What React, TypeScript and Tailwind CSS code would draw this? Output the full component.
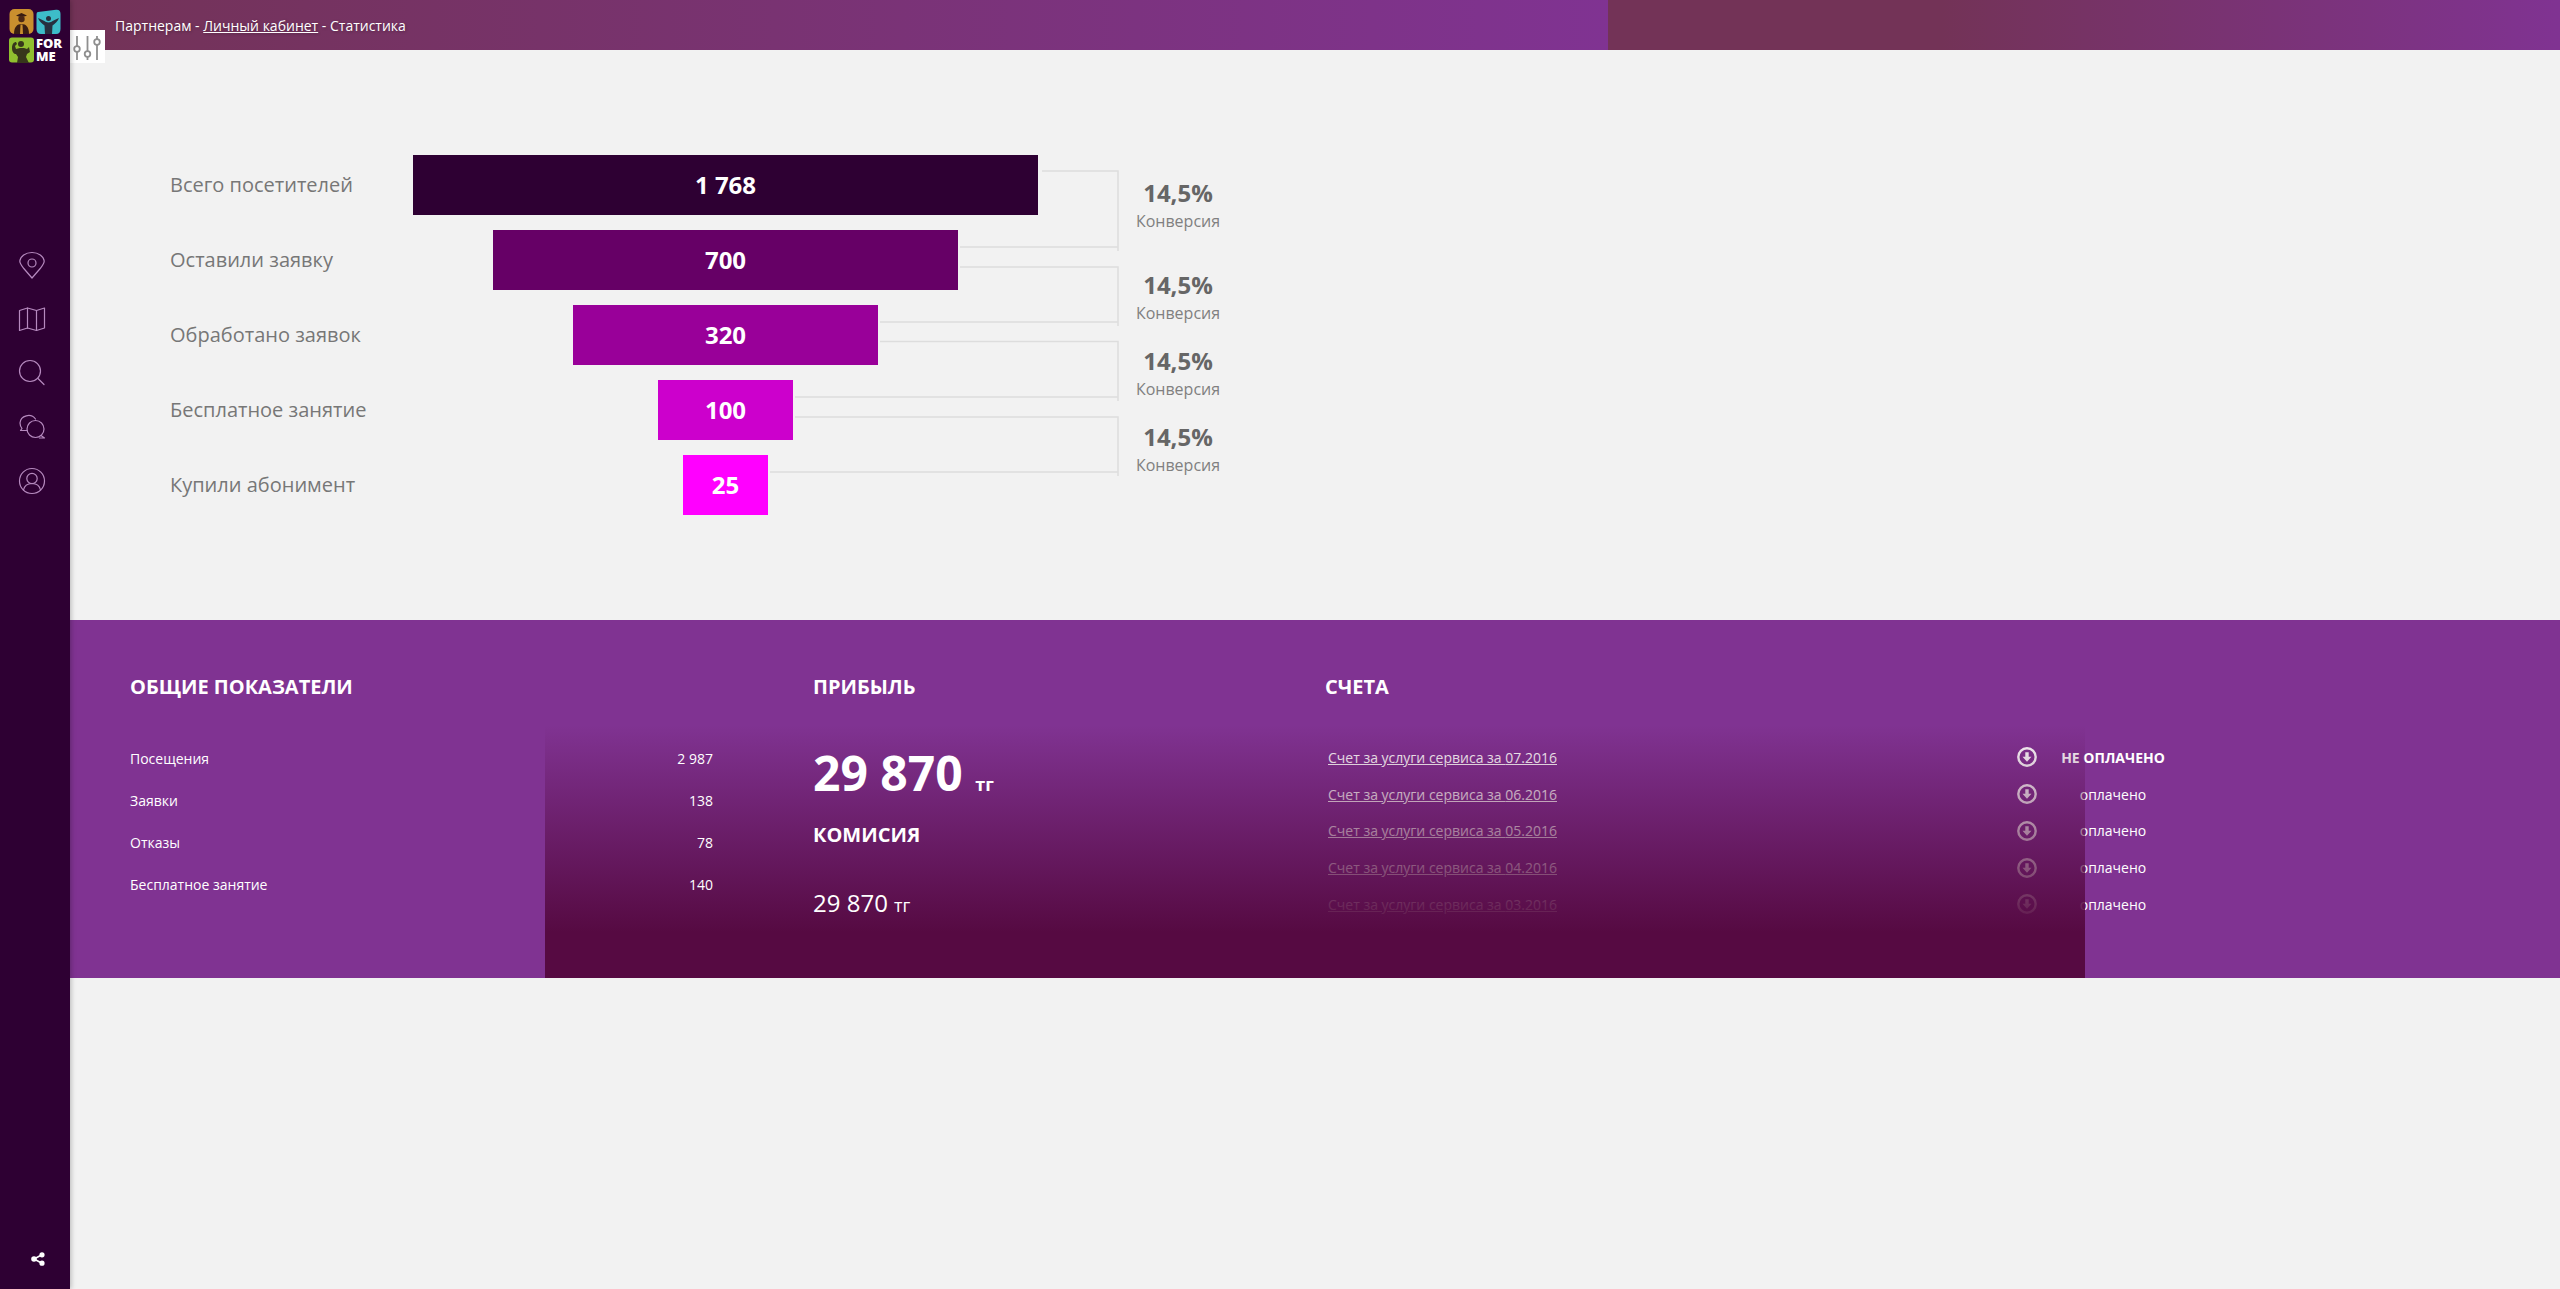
import React from "react";

const rows = [
  { label: "Всего посетителей", value: "1 768", w: "w-[625px]", bg: "bg-[#2e0033]" },
  { label: "Оставили заявку", value: "700", w: "w-[465px]", bg: "bg-[#660066]" },
  { label: "Обработано заявок", value: "320", w: "w-[305px]", bg: "bg-[#990099]" },
  { label: "Бесплатное занятие", value: "100", w: "w-[135px]", bg: "bg-[#cc00cc]" },
  { label: "Купили абонимент", value: "25", w: "w-[85px]", bg: "bg-[#ff00ff]" },
];

const general = [
  ["Посещения", "2 987"],
  ["Заявки", "138"],
  ["Отказы", "78"],
  ["Бесплатное занятие", "140"],
];

const invoices = [
  ["07.2016", "НЕ ОПЛАЧЕНО"],
  ["06.2016", "оплачено"],
  ["05.2016", "оплачено"],
  ["04.2016", "оплачено"],
  ["03.2016", "оплачено"],
];

function Logo() {
  return (
    <div className="grid h-[70px] w-[70px] grid-cols-[25px_25px] grid-rows-[26px_26px] content-start gap-[2px] pl-[9px] pt-[9px]">
      <svg viewBox="0 0 25 26" className="h-[26px] w-[25px]">
        <rect x="0.5" width="24" height="25" rx="5" fill="#c98f2e" />
        <path d="M7 6.500 12.500 4 18 6.500 15.500 7.500H9.500Z" fill="#3a1e12" />
        <circle cx="12.500" cy="10" r="3.200" fill="#4a2815" />
        <path d="M5 25c0-7 3-10 7.500-10S20 18 20 25Z" fill="#3a1e12" />
        <path d="M11.500 15.500h2l.5 9.500h-3Z" fill="#c98f2e" />
      </svg>
      <svg viewBox="0 0 25 26" className="h-[26px] w-[25px]">
        <path d="M2 3 20 .8c3-.3 4.500 1 4.500 4V20c0 3-1.500 5-4.500 5H5c-3 0-4.500-2-4.500-5V6C.5 4 1 3 2 3Z" fill="#3dbdc9" />
        <circle cx="12.500" cy="9.500" r="2.500" fill="#27303f" />
        <path d="M2 9c3 1 6 3 8 4 1.500.6 3.500.6 5 0 2-1 5-3 8-4-1 3-4 6-6.500 7.500L16 25H9l-.5-8.500C6 15 3 12 2 9Z" fill="#27303f" />
      </svg>
      <svg viewBox="0 0 25 26" className="h-[26px] w-[25px]">
        <rect y="0.500" width="25" height="25" rx="3" fill="#90bf2f" />
        <circle cx="12" cy="7" r="3" fill="#37371b" />
        <path d="M3 11c0-4 2-6 4-6l1 2-2 2 1 3 4-1h4l3 1 2-2 1 5-3 2-1 3 3 6H8l1-6-2-3c-2 0-4-2-4-6Z" fill="#37371b" />
      </svg>
      <div className="flex flex-col text-[13px] leading-[13px] font-extrabold text-white">
        <span>FOR</span>
        <span>ME</span>
      </div>
    </div>
  );
}

function NavIcon({ children }: { children: React.ReactNode }) {
  return (
    <div className="flex h-[54px] items-center justify-center pr-[6px]">
      <svg viewBox="0 0 28 28" className="h-[28px] w-[28px]" fill="none" stroke="#b68abf" strokeWidth="1.200" strokeLinejoin="round" strokeLinecap="round">
        {children}
      </svg>
    </div>
  );
}

function Sidebar() {
  return (
    <aside className="relative z-20 flex h-full w-[70px] shrink-0 flex-col bg-[#2e0033] shadow-[1px_0_5px_rgba(0,0,0,0.25)]">
      <Logo />
      <nav className="mt-[168px] flex flex-col">
        <NavIcon>
          <path d="M14 27 5.800 17.500C3.500 14.500 1.800 12.500 1.800 10A12.200 9.200 0 0 1 14 1.500 12.200 9.200 0 0 1 26.200 10c0 2.500-1.700 4.500-4 7.500Z" />
          <circle cx="14" cy="12" r="4" />
        </NavIcon>
        <NavIcon>
          <path d="M1.500 5.500 9.500 3l9 2.500 8-2.500v20l-8 2.500-9-2.500-8 2.500Z" />
          <path d="M9.500 3v20M18.500 5.500v20" />
        </NavIcon>
        <NavIcon>
          <circle cx="12" cy="12" r="10.500" />
          <path d="m20 19.500 6 6" />
        </NavIcon>
        <NavIcon>
          <path d="M9 17.500H2.500L4 15.500C2.500 13.500 2 12 2 10a8.500 8 0 0 1 15.500-4" />
          <circle cx="17.500" cy="16" r="8.500" />
          <path d="m23 22.500 3.500 2.500h-5" />
        </NavIcon>
        <NavIcon>
          <circle cx="14" cy="14" r="12.500" />
          <circle cx="14" cy="11.500" r="5.200" />
          <path d="M5.500 23c.8-4 4-6.500 8.500-6.500S21.700 19 22.500 23" />
        </NavIcon>
      </nav>
      <div className="mt-auto flex justify-center pb-[20px] pl-[6px]">
        <svg viewBox="0 0 14 14" className="h-[20px] w-[20px] p-[3px]" fill="#fff" stroke="#fff" strokeWidth="1.600">
          <path d="M3 7 11 2.800M3 7l8 4.200" />
          <circle cx="3" cy="7" r="2" />
          <circle cx="11" cy="2.800" r="1.800" />
          <circle cx="11" cy="11.200" r="1.800" />
        </svg>
      </div>
    </aside>
  );
}

function TopBar() {
  return (
    <header className="relative flex h-[50px] shrink-0">
      <div className="flex w-[1538px] items-center bg-[linear-gradient(to_right,#733357,#803392)] pl-[45px] text-[14px] text-white [text-shadow:1px_1px_3px_rgba(0,0,0,0.3)]">
        <span>
          Партнерам - <a className="underline">Личный кабинет</a> - Статистика
        </span>
      </div>
      <div className="flex-1 bg-[linear-gradient(to_right,#733357,#733357_35%,#803392)]" />
      <button className="absolute top-[30px] left-0 flex h-[33px] w-[35px] items-center justify-center bg-white">
        <svg viewBox="0 0 35 33" className="h-[33px] w-[35px]" fill="none" stroke="#8f8f8f" strokeWidth="1.800">
          <path d="M7 6v10M7 22v8M17.500 6v15M17.500 27v3M27 6v3M27 15v15" />
          <circle cx="7" cy="19" r="2.800" />
          <circle cx="17.500" cy="24" r="2.800" />
          <circle cx="27" cy="12" r="2.800" />
        </svg>
      </button>
    </header>
  );
}

function Funnel() {
  const conv = ["mt-0", "mt-[36px]", "mt-[20px]", "mt-[20px]"];
  return (
    <section className="relative flex h-[570px] shrink-0 pt-[105px] pl-[100px]">
      <div className="flex flex-col gap-[15px]">
        {rows.map((r) => (
          <div key={r.label} className="flex h-[60px] items-center">
            <div className="w-[243px] text-[20px] text-[#777777]">{r.label}</div>
            <div className="flex w-[625px] justify-center">
              <div className={`flex h-[60px] items-center justify-center text-[24px] font-bold text-white ${r.w} ${r.bg}`}>{r.value}</div>
            </div>
          </div>
        ))}
      </div>
      <div className="ml-[85px] flex w-[110px] flex-col pt-[22px] text-center">
        {conv.map((c, i) => (
          <div key={i} className={c}>
            <div className="text-[24px] leading-[32px] font-bold text-[#666666]">14,5%</div>
            <div className="text-[16px] leading-[24px] text-[#808080]">Конверсия</div>
          </div>
        ))}
      </div>
      <svg className="pointer-events-none absolute top-0 left-0 h-[570px] w-[1100px]" fill="none" stroke="#dddddd" strokeWidth="1.500">
        <path d="M972 121H1048V201M890 197H1048" />
        <path d="M890 217H1048V276M810 272H1048" />
        <path d="M810 291.500H1048V351M725 347H1048" />
        <path d="M725 367H1048V426M700 422H1048" />
      </svg>
    </section>
  );
}

function DownloadIcon() {
  return (
    <svg viewBox="0 0 20 20" className="h-[20px] w-[20px] shrink-0">
      <circle cx="10" cy="10" r="8.700" fill="none" stroke="#fff" strokeWidth="2.400" />
      <path d="M8.300 5.200h3.400V9.700H14.500l-4.500 5-4.500-5h2.800Z" fill="#fff" />
    </svg>
  );
}

function Band() {
  return (
    <section className="relative flex h-[358px] shrink-0 bg-[#803392] pt-[53px] pl-[60px] text-white">
      <div className="absolute top-[105px] right-[475px] bottom-0 left-[475px] z-10 bg-[linear-gradient(to_bottom,rgba(86,10,66,0),#560a42_82%)]" />
      <div className="relative z-20 mr-[100px] w-[583px]">
        <h2 className="text-[20px] leading-[28px] font-bold">ОБЩИЕ ПОКАЗАТЕЛИ</h2>
        <div className="mt-[36px] flex flex-col">
          {general.map(([a, b]) => (
            <div key={a} className="flex h-[42px] items-center justify-between text-[14px]">
              <span>{a}</span>
              <span>{b}</span>
            </div>
          ))}
        </div>
      </div>
      <div className="relative z-20 w-[512px]">
        <h2 className="text-[20px] leading-[28px] font-bold">ПРИБЫЛЬ</h2>
        <div className="mt-[42px] text-[48px] leading-[60px] font-bold">
          29 870 <span className="text-[18px]">тг</span>
        </div>
        <h2 className="mt-[6.500px] text-[20px] leading-[28px] font-bold">КОМИСИЯ</h2>
        <div className="mt-[36px] text-[24px] leading-[36px]">
          29 870 <span className="text-[18px]">тг</span>
        </div>
      </div>
      <div className="flex-1">
        <h2 className="text-[20px] leading-[28px] font-bold">СЧЕТА</h2>
        <div className="mt-[38px] flex flex-col">
          {invoices.map(([d, s], i) => (
            <div key={d} className="flex h-[36.750px] items-center">
              <a className="w-[692px] pl-[3px] text-[14px] underline">Счет за услуги сервиса за {d}</a>
              <DownloadIcon />
              <span className={`ml-[9px] w-[134px] text-center text-[14px] ${i === 0 ? "font-bold" : ""}`}>{s}</span>
            </div>
          ))}
        </div>
      </div>
    </section>
  );
}

export default function App() {
  return (
    <div className="flex h-[1289px] w-[2560px] overflow-hidden bg-[#f2f2f2] font-['Open_Sans',sans-serif]">
      <Sidebar />
      <main className="flex min-w-0 flex-1 flex-col">
        <TopBar />
        <Funnel />
        <Band />
      </main>
    </div>
  );
}
